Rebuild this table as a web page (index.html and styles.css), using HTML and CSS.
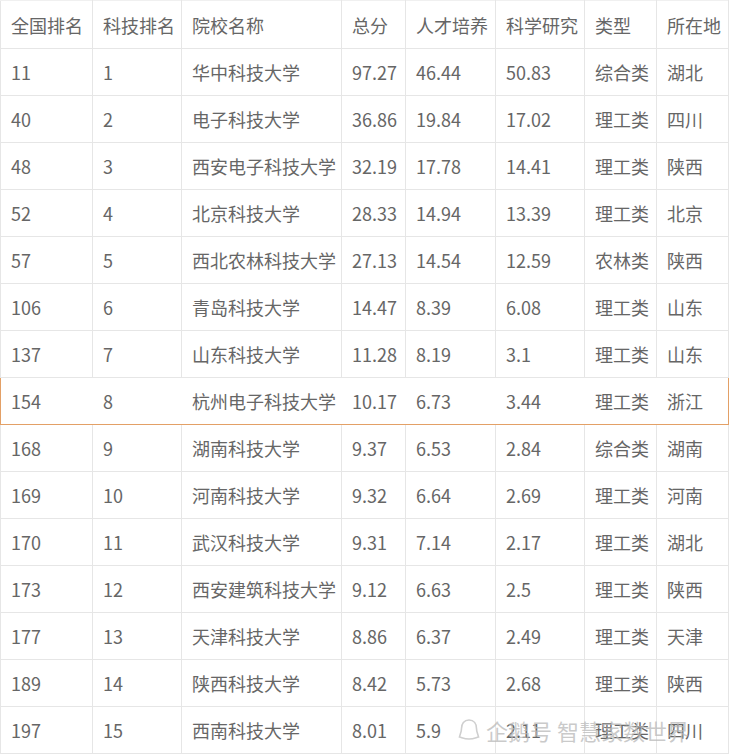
FILE: index.html
```html
<!DOCTYPE html>
<html lang="zh">
<head>
<meta charset="utf-8">
<link rel="stylesheet" href="styles.css">
</head>
<body>
<div class="wrap">
<table class="rank">
<colgroup>
<col class="c1"><col class="c2"><col class="c3"><col class="c4"><col class="c5"><col class="c6"><col class="c7"><col class="c8">
</colgroup>
<thead>
<tr><td>全国排名</td><td>科技排名</td><td>院校名称</td><td>总分</td><td>人才培养</td><td>科学研究</td><td>类型</td><td>所在地</td></tr>
</thead>
<tbody>
<tr><td>11</td><td>1</td><td>华中科技大学</td><td>97.27</td><td>46.44</td><td>50.83</td><td>综合类</td><td>湖北</td></tr>
<tr><td>40</td><td>2</td><td>电子科技大学</td><td>36.86</td><td>19.84</td><td>17.02</td><td>理工类</td><td>四川</td></tr>
<tr><td>48</td><td>3</td><td>西安电子科技大学</td><td>32.19</td><td>17.78</td><td>14.41</td><td>理工类</td><td>陕西</td></tr>
<tr><td>52</td><td>4</td><td>北京科技大学</td><td>28.33</td><td>14.94</td><td>13.39</td><td>理工类</td><td>北京</td></tr>
<tr><td>57</td><td>5</td><td>西北农林科技大学</td><td>27.13</td><td>14.54</td><td>12.59</td><td>农林类</td><td>陕西</td></tr>
<tr><td>106</td><td>6</td><td>青岛科技大学</td><td>14.47</td><td>8.39</td><td>6.08</td><td>理工类</td><td>山东</td></tr>
<tr><td>137</td><td>7</td><td>山东科技大学</td><td>11.28</td><td>8.19</td><td>3.1</td><td>理工类</td><td>山东</td></tr>
<tr class="hl"><td>154</td><td>8</td><td>杭州电子科技大学</td><td>10.17</td><td>6.73</td><td>3.44</td><td>理工类</td><td>浙江</td></tr>
<tr><td>168</td><td>9</td><td>湖南科技大学</td><td>9.37</td><td>6.53</td><td>2.84</td><td>综合类</td><td>湖南</td></tr>
<tr><td>169</td><td>10</td><td>河南科技大学</td><td>9.32</td><td>6.64</td><td>2.69</td><td>理工类</td><td>河南</td></tr>
<tr><td>170</td><td>11</td><td>武汉科技大学</td><td>9.31</td><td>7.14</td><td>2.17</td><td>理工类</td><td>湖北</td></tr>
<tr><td>173</td><td>12</td><td>西安建筑科技大学</td><td>9.12</td><td>6.63</td><td>2.5</td><td>理工类</td><td>陕西</td></tr>
<tr><td>177</td><td>13</td><td>天津科技大学</td><td>8.86</td><td>6.37</td><td>2.49</td><td>理工类</td><td>天津</td></tr>
<tr><td>189</td><td>14</td><td>陕西科技大学</td><td>8.42</td><td>5.73</td><td>2.68</td><td>理工类</td><td>陕西</td></tr>
<tr><td>197</td><td>15</td><td>西南科技大学</td><td>8.01</td><td>5.9</td><td>2.11</td><td>理工类</td><td>四川</td></tr>
</tbody>
</table>
<div class="watermark">
<svg class="wm-icon" width="22" height="24" viewBox="0 0 22 24"><path d="M11 2 C6 2 3.5 6 3.5 10.5 C3.5 14 2 16 1.5 19 C4 19.5 6 21 11 21 C16 21 18 19.5 20.5 19 C20 16 18.5 14 18.5 10.5 C18.5 6 16 2 11 2 Z" fill="none" stroke="#cfcfcf" stroke-width="1.6"/></svg>
<span class="wm-text">企鹅号 智慧家数世界</span>
</div>
</div>
</body>
</html>
```
FILE: styles.css
```css
html, body {
  margin: 0;
  padding: 0;
  background: #ffffff;
}
.wrap {
  position: relative;
  width: 729px;
  height: 755px;
  overflow: hidden;
}
.rank {
  border-collapse: collapse;
  table-layout: fixed;
  width: 728px;
  font-family: "Noto Sans CJK SC", "Microsoft YaHei", sans-serif;
  font-size: 18px;
  color: #666666;
}
.c1 { width: 92px; }
.c2 { width: 89px; }
.c3 { width: 160px; }
.c4 { width: 64px; }
.c5 { width: 90px; }
.c6 { width: 89px; }
.c7 { width: 72px; }
.c8 { width: 72px; }
.rank td {
  box-sizing: border-box;
  border: 1px solid #e6e6e6;
  height: 47px;
  padding: 0 0 0 10px;
  white-space: nowrap;
  overflow: hidden;
  line-height: 24px;
  vertical-align: middle;
}
.rank thead td {
  height: 48px;
  border-top-color: #f0f0f0;
}
.rank tr.hl td {
  border-top: 1px solid #e3a066;
  border-bottom: 1px solid #e3a066;
  border-left-color: transparent;
  border-right-color: transparent;
}
.rank tr.hl td:first-child {
  border-left: 1px solid #e3a066;
}
.rank tr.hl td:last-child {
  border-right: 1px solid #e3a066;
}
.watermark {
  position: absolute;
  left: 458px;
  top: 714px;
  display: flex;
  align-items: center;
  gap: 6px;
}
.wm-text {
  font-family: "Noto Sans CJK SC", sans-serif;
  font-size: 22px;
  color: rgba(185, 185, 185, 0.75);
  white-space: pre;
}
```
